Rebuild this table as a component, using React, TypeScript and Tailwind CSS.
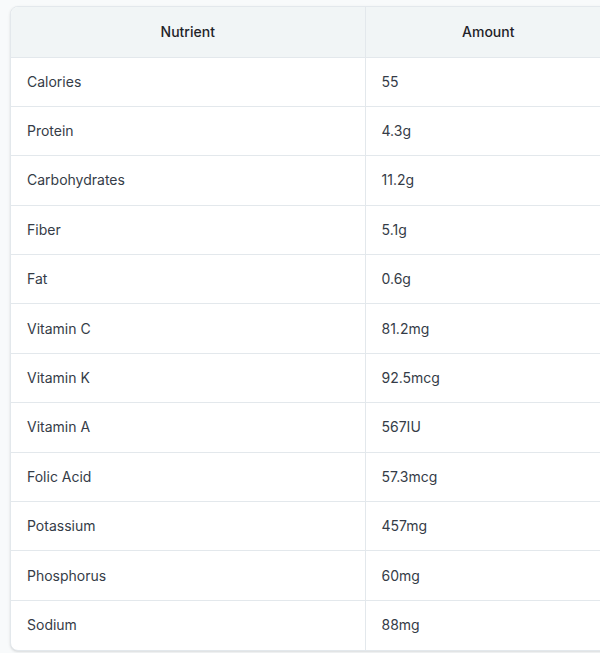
const rows: [string, string][] = [
  ['Calories', '55'],
  ['Protein', '4.3g'],
  ['Carbohydrates', '11.2g'],
  ['Fiber', '5.1g'],
  ['Fat', '0.6g'],
  ['Vitamin C', '81.2mg'],
  ['Vitamin K', '92.5mcg'],
  ['Vitamin A', '567IU'],
  ['Folic Acid', '57.3mcg'],
  ['Potassium', '457mg'],
  ['Phosphorus', '60mg'],
  ['Sodium', '88mg'],
];

export default function App() {
  return (
    <div className="h-[653px] w-[600px] overflow-hidden bg-[#f8fafb] pl-[10px] pt-[6px] font-['Inter',sans-serif] text-sm text-[#353c47]">
      <div className="w-[602px] overflow-hidden rounded-lg border border-[#e3e8ec] bg-white shadow-sm">
        <table className="w-full border-collapse">
          <colgroup>
            <col className="w-[354px]" />
            <col />
          </colgroup>
          <thead>
            <tr className="h-[50px] bg-[#f1f5f6]">
              <th className="border-r border-[#e3e8ec] text-center font-medium text-[#1f2328]">Nutrient</th>
              <th className="text-center font-medium text-[#1f2328]">Amount</th>
            </tr>
          </thead>
          <tbody>
            {rows.map(([name, amount]) => (
              <tr key={name} className="h-[49.4px] border-t border-[#e3e8ec]">
                <td className="border-r border-[#e3e8ec] px-4">{name}</td>
                <td className="px-4">{amount}</td>
              </tr>
            ))}
          </tbody>
        </table>
      </div>
    </div>
  );
}
